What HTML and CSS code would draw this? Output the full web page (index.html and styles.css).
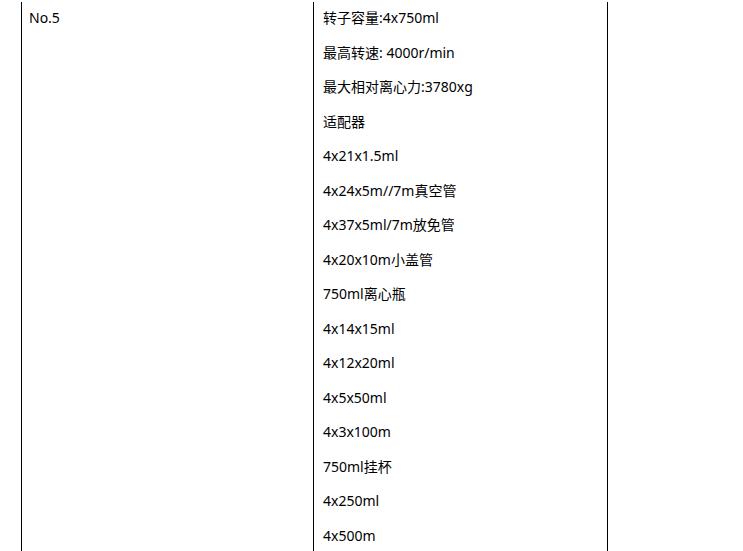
FILE: index.html
```html
<!DOCTYPE html>
<html lang="zh-CN">
<head>
    <meta charset="UTF-8">
    <meta name="viewport" content="width=device-width, initial-scale=1.0">
    <title>No.5</title>
    <link rel="stylesheet" href="styles.css">
</head>
<body>
    <div class="spec-table">
        <div class="cell cell-name">
            <p>No.5</p>
        </div>
        <div class="cell cell-spec">
            <p>转子容量:4x750ml</p>
            <p>最高转速: 4000r/min</p>
            <p>最大相对离心力:3780xg</p>
            <p>适配器</p>
            <p>4x21x1.5ml</p>
            <p>4x24x5m//7m真空管</p>
            <p>4x37x5ml/7m放免管</p>
            <p>4x20x10m小盖管</p>
            <p>750ml离心瓶</p>
            <p>4x14x15ml</p>
            <p>4x12x20ml</p>
            <p>4x5x50ml</p>
            <p>4x3x100m</p>
            <p>750ml挂杯</p>
            <p>4x250ml</p>
            <p>4x500m</p>
        </div>
        <div class="cell cell-extra"></div>
    </div>
</body>
</html>
```

FILE: styles.css
```css
/* Reset */
body, p {
    margin: 0;
    padding: 0;
}

body {
    background: #fff;
    color: #000;
    font-family: "Noto Sans", "Noto Sans CJK SC", sans-serif;
    font-size: 14px;
    overflow: hidden;
    height: 551px;
}

/* Table */
.spec-table {
    display: flex;
    margin: 2px 0 0 21px;
    min-height: 549px;
}

.cell {
    flex-shrink: 0;
    border-left: 1px solid #000;
    box-sizing: border-box;
}

.cell p {
    line-height: 20px;
    padding: 6px 0 8.5px;
}

.cell-name {
    width: 292px;
    padding-left: 7px;
}

.cell-spec {
    width: 294px;
    padding-left: 9px;
}

.cell-extra {
    width: 120px;
}
```
